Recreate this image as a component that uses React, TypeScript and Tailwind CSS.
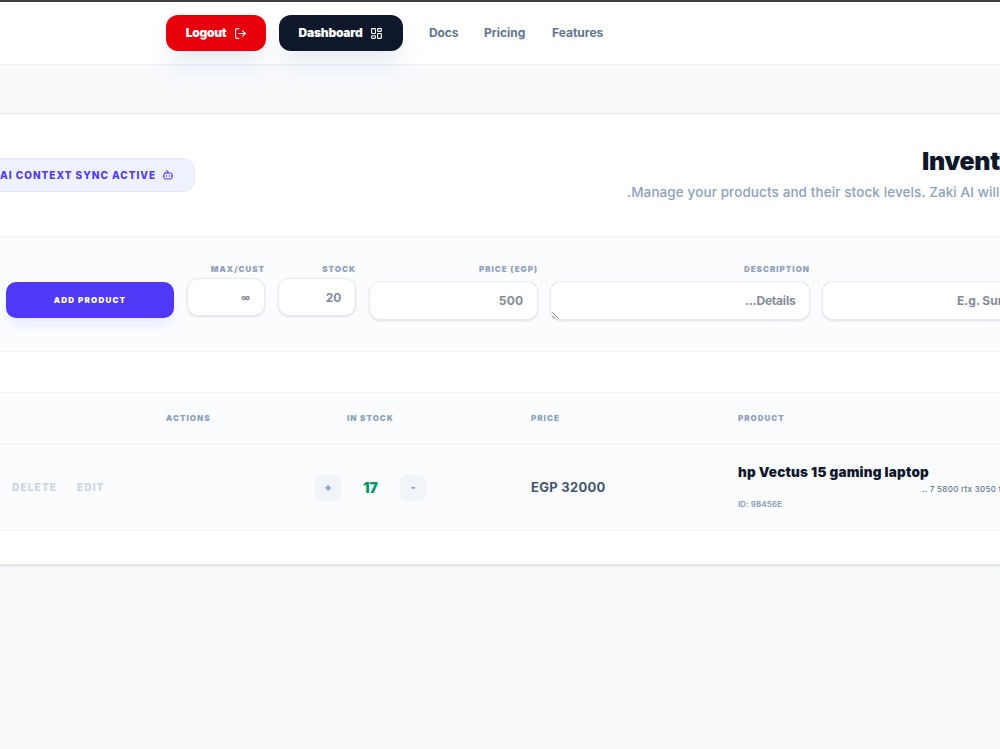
import { Bot, LayoutDashboard, LogOut } from "lucide-react";
import clsx from "clsx";

interface FieldProps {
  label?: string;
  placeholder: string;
  className?: string;
  inputClassName?: string;
  multiline?: boolean;
}

const inputBase =
  "block w-full rounded-[11px] border-[1.5px] border-[#e6ebf2] bg-white text-right font-bold text-[#858b98] placeholder:text-[#858b98] placeholder:opacity-100 shadow-[0_1px_2px_rgba(15,23,42,0.12)] outline-none";

const NAV_LINKS = [
  { label: "Docs", className: "w-[55px] tracking-[-0.15px]" },
  { label: "Pricing", className: "w-[68px]" },
  { label: "Features", className: "tracking-[0px]" },
];

function Header() {
  return (
    <header className="flex h-[65px] items-center border-b border-[#eceff4] border-t-2 border-t-[#3f3f3f] bg-white pl-[166px] text-xs">
      <button className="flex h-[36px] w-[100px] items-center gap-[7px] rounded-[12px] bg-[#e7000b] pl-[19px] font-black text-white shadow-[0_16px_22px_-4px_rgba(190,202,220,0.42)]">
        <span className="w-[42px] whitespace-nowrap tracking-[-0.3px]">Logout</span>
        <LogOut size={13} strokeWidth={2} />
      </button>
      <button className="ml-[13px] flex h-[36px] w-[124px] items-center gap-[7px] rounded-[12px] bg-[#0f172b] pl-[19px] font-black text-white shadow-[0_16px_22px_-4px_rgba(190,202,220,0.42)]">
        <span className="w-[65px] whitespace-nowrap tracking-[-0.2px]">Dashboard</span>
        <LayoutDashboard size={13} strokeWidth={2} />
      </button>
      <nav className="ml-[26px] flex font-bold text-[#62748e]">
        {NAV_LINKS.map((link) => (
          <a key={link.label} href="#" className={link.className}>
            {link.label}
          </a>
        ))}
      </nav>
    </header>
  );
}

function Field({ label, placeholder, className, inputClassName, multiline }: FieldProps) {
  return (
    <div className={clsx("flex shrink-0 flex-col", className)}>
      <label className="flex h-[10px] items-center justify-end whitespace-nowrap text-[8px] font-black tracking-[1px] text-[#90a1b9]">
        {label}
      </label>
      {multiline ? (
        <div className="relative">
          <textarea
            dir="rtl"
            rows={1}
            placeholder={placeholder}
            className={clsx(inputBase, "resize-none overflow-hidden", inputClassName)}
          />
          <svg className="absolute bottom-[1px] left-[2px]" width="7" height="7" viewBox="0 0 7 7" stroke="#555" strokeWidth="0.8">
            <path d="M0.5 0.5 6.5 6.5M0.5 4 3 6.5" />
          </svg>
        </div>
      ) : (
        <input placeholder={placeholder} className={clsx(inputBase, inputClassName)} />
      )}
    </div>
  );
}

function ProductForm() {
  return (
    <form className="flex h-[116px] items-start border-y border-[#f1f4f9] bg-[#fbfcfe] pl-[6px] pt-[27px]">
      <button
        type="button"
        className="mt-[18px] h-[36px] w-[168px] shrink-0 rounded-[10px] bg-[#4f39f6] text-[8px] font-black tracking-[1.2px] text-white shadow-[0_8px_12px_-2px_rgba(198,210,255,0.4)]"
      >
        ADD PRODUCT
      </button>
      <Field
        label="MAX/CUST"
        placeholder="∞"
        className="ml-[13px] w-[78px]"
        inputClassName="mt-[4px] h-[38px] pr-[14px] text-[9px]"
      />
      <Field
        label="STOCK"
        placeholder="20"
        className="ml-[12.5px] w-[78.5px]"
        inputClassName="mt-[4px] h-[38px] pr-[13.5px] text-xs tracking-[0.1px]"
      />
      <Field
        label="PRICE (EGP)"
        placeholder="500"
        className="ml-[13px] w-[169px]"
        inputClassName="mt-[7px] h-[39px] pr-[13.5px] text-xs tracking-[0.3px]"
      />
      <Field
        label="DESCRIPTION"
        placeholder="Details..."
        className="ml-[12px] w-[260px]"
        inputClassName="mt-[7px] h-[39px] pt-[11px] pr-[13.5px] text-xs tracking-[-0.2px]"
        multiline
      />
      <Field
        placeholder="E.g. Sunglasses"
        className="ml-[12px] w-[260px]"
        inputClassName="mt-[7px] h-[39px] pl-[134px] text-left! text-xs"
      />
    </form>
  );
}

function ProductTable() {
  return (
    <div className="mt-[40px] bg-[#fbfcfe]">
      <div className="grid h-[53px] grid-cols-[315px_216px_207px_1fr] items-center border-y border-[#f1f4f9] pb-[2px] text-[8px] font-black tracking-[1px] text-[#90a1b9]">
        <span className="pl-[166px]">ACTIONS</span>
        <span className="pl-[32px]">IN STOCK</span>
        <span>PRICE</span>
        <span>PRODUCT</span>
      </div>
      <div className="grid h-[86px] grid-cols-[315px_216px_207px_1fr] items-center border-b border-[#f1f4f9]">
        <div className="flex pl-[12px] text-[10px] font-extrabold tracking-[1.2px] text-[#cad5e2]">
          <button className="w-[65px] text-left">DELETE</button>
          <button>EDIT</button>
        </div>
        <div className="flex items-center">
          <button className="size-[26px] rounded-[6px] bg-[#f1f5f9] text-[11px] font-black text-[#90a1b9]">+</button>
          <span className="w-[59px] text-center text-[14px] font-black text-[#009966]">17</span>
          <button className="size-[26px] rounded-[6px] bg-[#f1f5f9] text-[11px] font-black text-[#90a1b9]">-</button>
        </div>
        <span className="text-[13px] font-bold tracking-[0.28px] text-[#45556c]">EGP 32000</span>
        <div className="flex flex-col whitespace-nowrap">
          <span className="text-[13.5px] leading-[18px] font-black tracking-[0.2px] text-[#0f172b]">
            hp Vectus 15 gaming laptop
          </span>
          <span className="mt-[1px] pl-[184px] text-[8px] leading-[14px] font-medium tracking-[0.3px] text-[#62748e]">
            .. 7 5800 rtx 3050 t
          </span>
          <span className="text-[8px] leading-[16px] font-bold tracking-[0.05px] text-[#90a1b9]">ID: 98456E</span>
        </div>
      </div>
    </div>
  );
}

export default function App() {
  return (
    <div className="h-[749px] w-[1000px] overflow-hidden bg-[#f8fafc] font-['Inter',sans-serif]">
      <Header />
      <main className="mt-[48px] h-[452px] border-t border-b border-[#e2e8f0] bg-white shadow-[0_1px_2px_rgba(0,0,0,0.12)]">
        <div className="flex h-[122px] items-start justify-between">
          <div className="mt-[44px] flex h-[34px] w-[195px] items-center justify-end gap-[6px] rounded-r-[13px] border border-l-0 border-[#e4e9fe] bg-[#eef2ff] pr-[20px] whitespace-nowrap text-[#4f39f6]">
            <span className="text-[10px] font-extrabold tracking-[1px]">AI CONTEXT SYNC ACTIVE</span>
            <Bot size={12} strokeWidth={2} />
          </div>
          <div className="w-[373px] whitespace-nowrap">
            <h1 className="mt-[30px] pl-[295px] text-[25px] leading-[34px] font-black tracking-[-0.3px] text-[#0f172b]">
              Invent
            </h1>
            <p className="mt-[4px] text-[13.5px] leading-[20px] font-medium tracking-[0.1px] text-[#90a1b9]">
              .Manage your products and their stock levels. Zaki AI will
            </p>
          </div>
        </div>
        <ProductForm />
        <ProductTable />
      </main>
    </div>
  );
}
